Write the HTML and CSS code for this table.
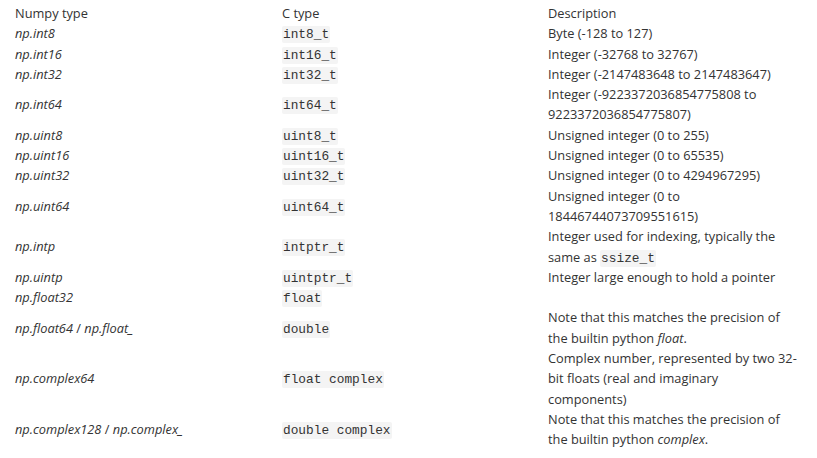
FILE: index.html
```html
<!DOCTYPE html>
<html>
<head>
<meta charset="utf-8">
<link rel="stylesheet" href="styles.css">
</head>
<body>
<table class="types">
  <colgroup><col class="c1"><col class="c2"><col class="c3"></colgroup>
  <thead>
    <tr><th>Numpy type</th><th>C type</th><th>Description</th></tr>
  </thead>
  <tbody>
    <tr><td><em>np.int8</em></td><td><code>int8_t</code></td><td>Byte (-128 to 127)</td></tr>
    <tr><td><em>np.int16</em></td><td><code>int16_t</code></td><td>Integer (-32768 to 32767)</td></tr>
    <tr><td><em>np.int32</em></td><td><code>int32_t</code></td><td>Integer (-2147483648 to 2147483647)</td></tr>
    <tr><td><em>np.int64</em></td><td><code>int64_t</code></td><td>Integer (-9223372036854775808 to 9223372036854775807)</td></tr>
    <tr><td><em>np.uint8</em></td><td><code>uint8_t</code></td><td>Unsigned integer (0 to 255)</td></tr>
    <tr><td><em>np.uint16</em></td><td><code>uint16_t</code></td><td>Unsigned integer (0 to 65535)</td></tr>
    <tr><td><em>np.uint32</em></td><td><code>uint32_t</code></td><td>Unsigned integer (0 to 4294967295)</td></tr>
    <tr><td><em>np.uint64</em></td><td><code>uint64_t</code></td><td>Unsigned integer (0 to 18446744073709551615)</td></tr>
    <tr><td><em>np.intp</em></td><td><code>intptr_t</code></td><td>Integer used for indexing, typically the same as <code>ssize_t</code></td></tr>
    <tr><td><em>np.uintp</em></td><td><code>uintptr_t</code></td><td>Integer large enough to hold a pointer</td></tr>
    <tr><td><em>np.float32</em></td><td><code>float</code></td><td></td></tr>
    <tr><td><em>np.float64</em> / <em>np.float_</em></td><td><code>double</code></td><td>Note that this matches the precision of the builtin python <em>float</em>.</td></tr>
    <tr><td><em>np.complex64</em></td><td><code>float complex</code></td><td>Complex number, represented by two 32-bit floats (real and imaginary components)</td></tr>
    <tr><td><em>np.complex128</em> / <em>np.complex_</em></td><td><code>double complex</code></td><td>Note that this matches the precision of the builtin python <em>complex</em>.</td></tr>
  </tbody>
</table>
</body>
</html>
```

FILE: styles.css
```css
html, body {
  margin: 0;
  padding: 0;
  background: #fff;
}
body {
  padding: 3px 12px 0 15px;
  font-family: "Open Sans", sans-serif;
  font-size: 12.8px;
  line-height: 20.3px;
  color: #333;
}
.types {
  border-collapse: collapse;
  border-spacing: 0;
  table-layout: fixed;
  width: 785px;
}
.c1 { width: 267px; }
.c2 { width: 266px; }
.c3 { width: 252px; }
.types th,
.types td {
  padding: 0;
  text-align: left;
  vertical-align: middle;
  font-weight: 400;
  height: 20.3px;
}
.types code {
  font-family: "Liberation Mono", monospace;
  font-size: 12.8px;
  line-height: 1;
  background: #f4f4f4;
  border-radius: 2px;
  padding: 1px 1px;
}
```
